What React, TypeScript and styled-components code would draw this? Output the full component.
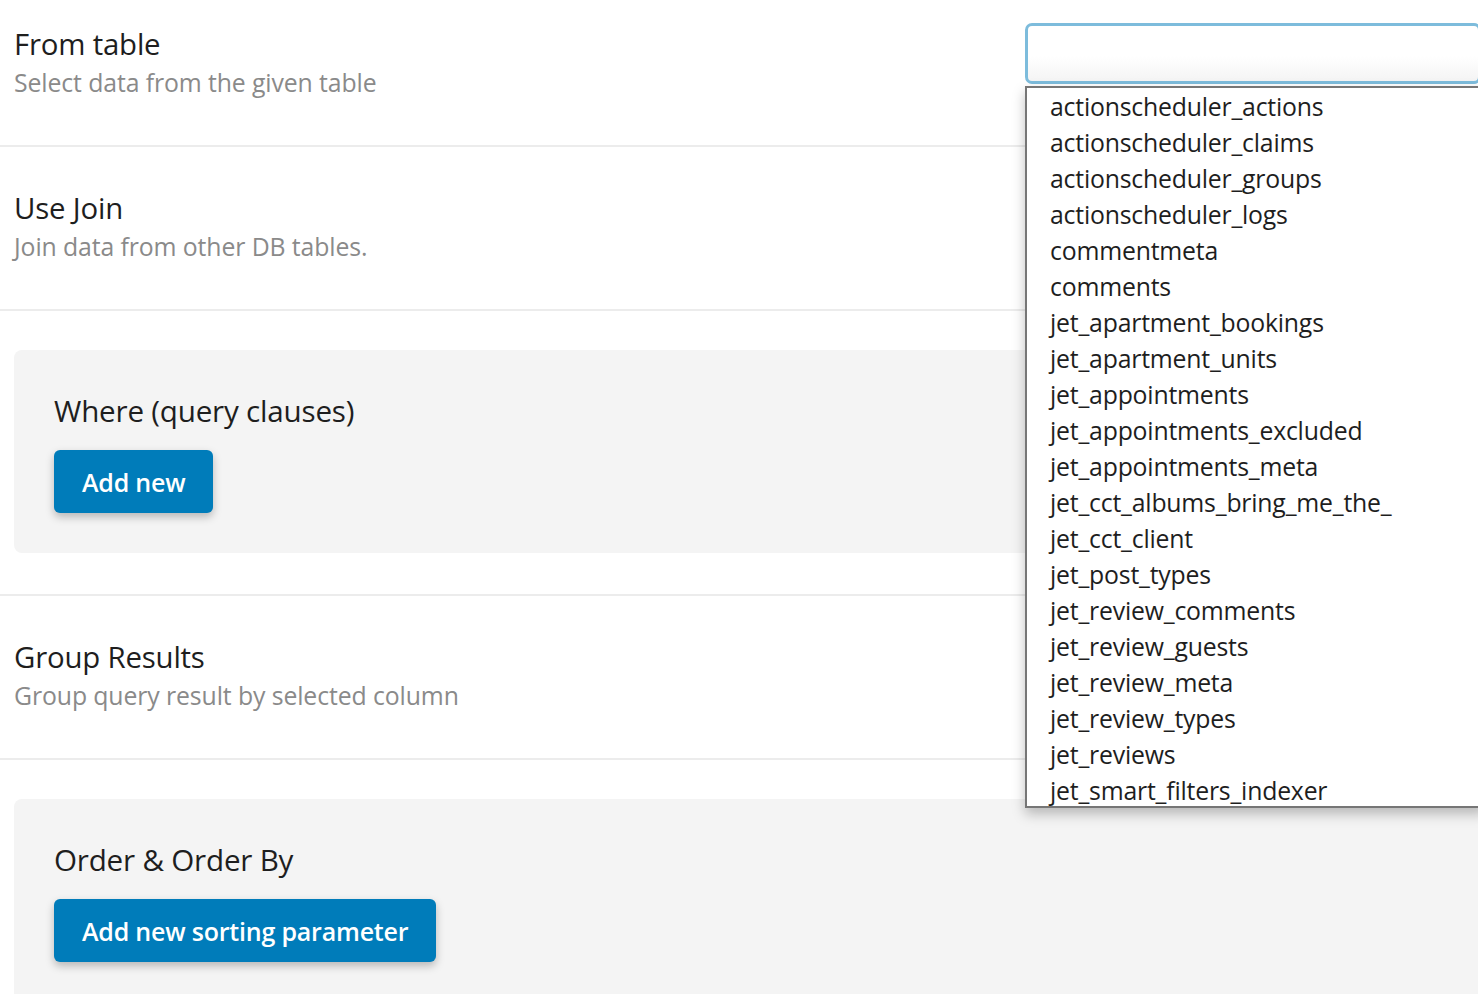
import styled, { createGlobalStyle } from "styled-components";

const tables = [
  "actionscheduler_actions",
  "actionscheduler_claims",
  "actionscheduler_groups",
  "actionscheduler_logs",
  "commentmeta",
  "comments",
  "jet_apartment_bookings",
  "jet_apartment_units",
  "jet_appointments",
  "jet_appointments_excluded",
  "jet_appointments_meta",
  "jet_cct_albums_bring_me_the_",
  "jet_cct_client",
  "jet_post_types",
  "jet_review_comments",
  "jet_review_guests",
  "jet_review_meta",
  "jet_review_types",
  "jet_reviews",
  "jet_smart_filters_indexer",
];

const GlobalStyle = createGlobalStyle`
  html, body {
    margin: 0;
    padding: 0;
    background: #fff;
    overflow: hidden;
  }
  body {
    font-family: "Open Sans", "Noto Sans", sans-serif;
    color: #1e1e1e;
  }
  * {
    box-sizing: border-box;
  }
`;

const Page = styled.div`
  width: 1478px;
  height: 994px;
  overflow: hidden;
`;

// the page is scrolled a bit, the first row starts above the window
const Settings = styled.div`
  margin-top: -17px;
`;

const Row = styled.div`
  position: relative;
  display: flex;
  align-items: flex-start;
  justify-content: space-between;
  padding: 42px 0 44px 14px;
  border-bottom: 2px solid #ececec;
`;

const PanelRow = styled.div`
  padding: 39px 0 41px 14px;
  border-bottom: 2px solid #ececec;
`;

const LabelBox = styled.div`
  display: flex;
  flex-direction: column;
`;

const Title = styled.div`
  font-size: 29.4px;
  line-height: 38px;
  color: #1e1e1e;
  letter-spacing: -0.2px;
`;

const Description = styled.div`
  font-size: 24.8px;
  line-height: 38px;
  color: #8a8a8a;
  letter-spacing: -0.1px;
`;

const Panel = styled.div`
  background: #f4f4f4;
  border-radius: 8px 0 0 8px;
  padding: 41px 40px 40px 40px;
  min-height: 203px;
`;

const PanelTitle = styled.div`
  font-size: 29.6px;
  line-height: 40px;
  color: #1e1e1e;
  margin-bottom: 19px;
  letter-spacing: -0.2px;
`;

const Button = styled.button`
  display: inline-flex;
  align-items: center;
  height: 63px;
  padding: 0 28px;
  border: none;
  border-radius: 6px;
  background: #007cba;
  color: #fff;
  font-family: "Open Sans", "Noto Sans", sans-serif;
  font-weight: 600;
  font-size: 25px;
  letter-spacing: -0.2px;
  box-shadow: 0 4px 8px rgba(0, 0, 0, 0.25);
  cursor: pointer;
`;

const Control = styled.div`
  position: relative;
  width: 456px;
  margin-top: -2px;
  margin-right: -3px;
`;

const Input = styled.input`
  display: block;
  width: 100%;
  height: 61px;
  border: 3px solid #7dbcdc;
  border-radius: 7px;
  background: linear-gradient(#ffffff 55%, #f4f4f4);
  outline: none;
  font-family: "Open Sans", "Noto Sans", sans-serif;
  font-size: 24px;
  padding: 0 20px;
`;

const ListBox = styled.div`
  position: absolute;
  top: 63px;
  left: 0;
  width: 460px;
  height: 722px;
  background: #fff;
  border: 2px solid #767676;
  box-shadow: 0 6px 12px rgba(0, 0, 0, 0.25);
  z-index: 10;
  overflow: hidden;
`;

const Option = styled.div`
  height: 36px;
  line-height: 36px;
  padding-left: 23px;
  font-size: 24.8px;
  color: #1e1e1e;
  white-space: nowrap;
  letter-spacing: -0.2px;
`;

export default function App() {
  return (
    <Page>
      <GlobalStyle />
      <Settings>
        <Row>
          <LabelBox>
            <Title>From table</Title>
            <Description>Select data from the given table</Description>
          </LabelBox>
          <Control>
            <Input />
            <ListBox>
              {tables.map((t) => (
                <Option key={t}>{t}</Option>
              ))}
            </ListBox>
          </Control>
        </Row>
        <Row>
          <LabelBox>
            <Title>Use Join</Title>
            <Description>Join data from other DB tables.</Description>
          </LabelBox>
        </Row>
        <PanelRow>
          <Panel>
            <PanelTitle>Where (query clauses)</PanelTitle>
            <Button>Add new</Button>
          </Panel>
        </PanelRow>
        <Row>
          <LabelBox>
            <Title>Group Results</Title>
            <Description>Group query result by selected column</Description>
          </LabelBox>
        </Row>
        <PanelRow>
          <Panel>
            <PanelTitle>Order &amp; Order By</PanelTitle>
            <Button>Add new sorting parameter</Button>
          </Panel>
        </PanelRow>
      </Settings>
    </Page>
  );
}
